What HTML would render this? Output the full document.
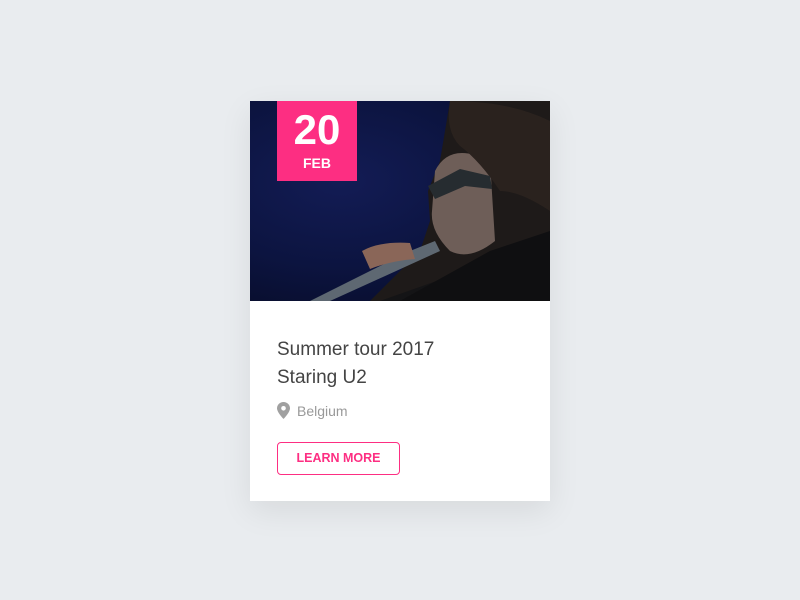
<!DOCTYPE html>
<html><head><style>
body{margin:0;width:800px;height:600px;background:#e9ecef;font-family:"Liberation Sans",sans-serif;position:relative;overflow:hidden}
.card{position:absolute;left:250px;top:101px;width:300px;height:400px;background:#fff;box-shadow:0 10px 30px rgba(0,0,0,0.08)}
.img{position:absolute;left:0;top:0;width:300px;height:200px;overflow:hidden;background:radial-gradient(ellipse at 30% 40%,#131c55 0%,#0c1440 50%,#060a22 100%)}
.date{position:absolute;left:27px;top:0;width:80px;height:80px;background:#fd2e82;color:#fff;text-align:center}
.d1{font-size:42px;font-weight:bold;line-height:42px;padding-top:8px}
.d2{font-size:14px;font-weight:bold;line-height:16px;margin-top:4px}
.t{position:absolute;left:27px;top:235px;font-size:19px;line-height:28px;color:#444}
.loc{position:absolute;left:27px;top:301px;font-size:14px;color:#999;line-height:18px}
.btn{position:absolute;left:27px;top:341px;width:121px;height:31px;border:1px solid #fd2e82;border-radius:4px;color:#fd2e82;font-size:12.5px;font-weight:bold;text-align:center;line-height:31px}
</style></head><body>
<div class="card">
<div class="img">
<svg width="300" height="200" style="position:absolute;left:0;top:0">
<path d="M200 0 L300 0 L300 200 L120 200 L150 170 L170 150 L180 120 L178 90 L190 60 Z" fill="#1e1a19"/>
<path d="M185 70 Q200 40 240 60 L245 140 Q220 160 200 150 Q180 130 182 110 Z" fill="#6e5e58"/>
<path d="M200 0 Q260 0 300 20 L300 110 Q270 90 250 90 Q230 60 210 45 Q195 30 200 0Z" fill="#2a221e"/>
<path d="M178 85 L210 68 L240 75 L242 88 L215 85 L185 98 Z" fill="#262c30"/>
<path d="M130 200 L300 140 L300 200 Z" fill="#141416"/>
<path d="M150 200 L240 150 L300 130 L300 200Z" fill="#0f0f11"/>
<path d="M60 200 L160 150 L185 140 L190 150 L80 200Z" fill="#5e6872"/>
<path d="M112 150 Q130 140 160 142 L165 158 Q140 160 120 168 Z" fill="#8a6658"/>
</svg>
<div class="date"><div class="d1">20</div><div class="d2">FEB</div></div>
</div>
<div class="t">Summer tour 2017<br>Staring U2</div>
<div class="loc"><svg width="13" height="17" viewBox="0 0 13 17" style="vertical-align:-3px;margin-right:7px"><path d="M6.5 0C2.9 0 0 2.8 0 6.3 0 10.5 6.5 17 6.5 17S13 10.5 13 6.3C13 2.8 10.1 0 6.5 0Z" fill="#a0a0a0"/><circle cx="6.5" cy="6.3" r="2.3" fill="#fff"/></svg>Belgium</div>
<div class="btn">LEARN MORE</div>
</div>
</body></html>
